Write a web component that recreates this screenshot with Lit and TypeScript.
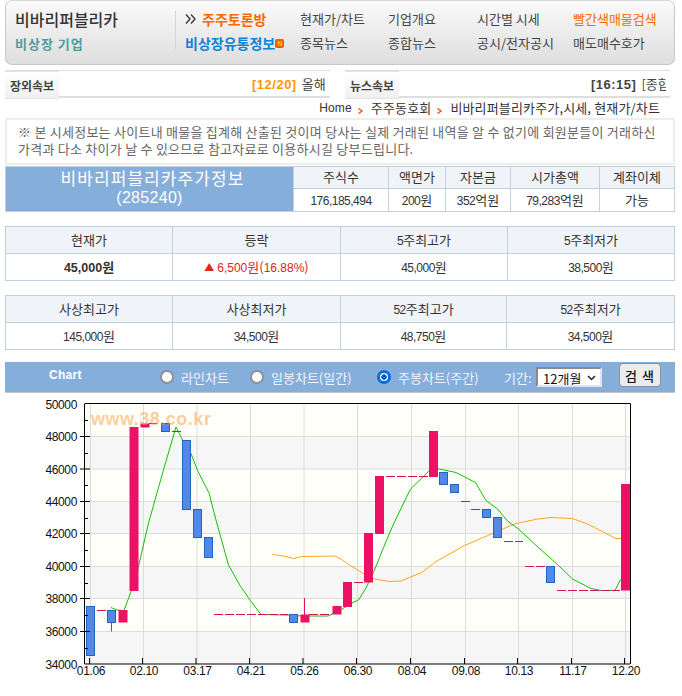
import { LitElement, html, css, svg } from "lit";
import { customElement } from "lit/decorators.js";

type Candle = { x: number; t: number; b: number; up: boolean; wick?: [number, number] };
const candles: Candle[] = [
  { x: 86.5, t: 606.5, b: 655.5, up: false },
  { x: 107.5, t: 610.5, b: 622.5, up: false, wick: [622, 631.5] },
  { x: 118.5, t: 610, b: 622.5, up: true },
  { x: 129.5, t: 427, b: 591, up: true },
  { x: 140.5, t: 423.5, b: 427.5, up: true },
  { x: 161.5, t: 423.5, b: 431.5, up: false },
  { x: 182.5, t: 440.5, b: 509.5, up: false },
  { x: 193.5, t: 509.5, b: 537.5, up: false },
  { x: 204.5, t: 537.5, b: 557.5, up: false },
  { x: 289.5, t: 614.5, b: 622.5, up: false },
  { x: 300.5, t: 614.5, b: 622.5, up: true, wick: [598, 615] },
  { x: 332.5, t: 606, b: 614.5, up: true },
  { x: 343, t: 582, b: 607, up: true },
  { x: 364, t: 533, b: 582.5, up: true },
  { x: 375, t: 476, b: 534, up: true },
  { x: 429, t: 431, b: 477, up: true },
  { x: 439.5, t: 472.5, b: 484.5, up: false },
  { x: 450.5, t: 484.5, b: 492.5, up: false },
  { x: 482.5, t: 509.5, b: 517.5, up: false },
  { x: 493.5, t: 517.5, b: 537.5, up: false },
  { x: 546.5, t: 566.5, b: 582.5, up: false },
  { x: 621, t: 484, b: 590.5, up: true },
];
const dashes: [number, number, number][] = [
  [97, 106, 610.5], [149, 157, 423.5], [172, 181, 431.5], [214, 288, 614.5],
  [309, 332, 614.5], [354, 363, 582.5], [386, 428, 476.5], [461, 470, 501.5],
  [471, 480, 509.5], [504, 523, 541.5], [525, 545, 566.5], [557, 620, 590.5],
];
const green = "111,607.5 117,610 124,610.5 131,591.5 138.5,566.5 148,525 164,468 176,427 182.5,440 190.5,452.5 198,471.5 209,493 216.5,522 228.5,565 240,585.5 250,600 261,614.5 286.5,615 302,616 328,616 341,610 349.5,604 358.5,600 366,588 374.5,570 386,541.5 393.5,524 410.5,489 429,471 439.5,469 456,472.5 475.5,482.5 486,500.5 497.5,509 507.5,521 518.5,529 534.5,544 557.5,564.5 572.5,579 591,588.5 601,590.5 615,590.5 620.5,579.5";
const orange = "272.5,554.5 283.5,556 293.5,558.5 301.5,556.5 335,556 341,559 349.5,565 362.5,573 374.5,579 389.5,581.5 401,581 422.5,572 434.5,562.5 464.5,545.5 492.5,533.5 514.5,524 537.5,519 551,517.5 572.5,518.5 587.5,524 594.5,527.5 616,538.5 621,538.5";
const ys = [404, 436.5, 469, 501.5, 533.5, 566.5, 598.5, 631.5, 664];
const yLabels = ["50000", "48000", "46000", "44000", "42000", "40000", "38000", "36000", "34000"];
const xs: [number, string][] = [
  [90.5, "01.06"], [143.5, "02.10"], [197, "03.17"], [250.5, "04.21"], [304, "05.26"], [357.5, "06.30"],
  [411.5, "08.04"], [465.5, "09.08"], [518.5, "10.13"], [572.5, "11.17"], [625.5, "12.20"],
];

@customElement("app-root")
export class AppRoot extends LitElement {
  static styles = css`
    :host { display: block; width: 682px; height: 696px; overflow: hidden; background: #fff; color: #333;
      font: 13px "Noto Sans CJK KR", sans-serif; }
    .wrap { width: 670px; margin-left: 5px; }
    .n { font-family: "Liberation Sans", sans-serif; font-size: 12px; letter-spacing: -0.5px; }

    .top { height: 65px; box-sizing: border-box; border: 1px solid #c8c8c8; border-top-color: #d8d8d8; border-radius: 7px;
      background: linear-gradient(#fafafa, #dfdede); display: flex; align-items: stretch; line-height: 16px; }
    .brand { width: 170px; height: 38px; margin-top: 10px; padding: 0 0 0 9px; box-sizing: border-box; border-right: 1px solid #d4d4d4;
      display: flex; flex-direction: column; gap: 9px; }
    .brand b { font-weight: 500; font-size: 16px; color: #333; white-space: nowrap; }
    .brand em { font-style: normal; font-weight: 700; font-size: 13px; color: #4b9da3; letter-spacing: 1px; }
    .links { display: grid; grid-template-columns: 115px 88px 89px 96px 96px; grid-auto-rows: 24px; margin: 6px 0 0 9px; align-items: center; white-space: nowrap; }
    .links a { color: #444; }
    .links a.red { color: #f56a00; }
    .links a.hot { color: #ff6600; font-weight: 700; font-size: 14px; display: flex; align-items: center; gap: 6px; }
    .links a.hot svg { flex: none; }
    .links a.blue { color: #0a84d6; font-weight: 700; font-size: 14px; display: flex; align-items: center; }
    .badge { width: 9px; height: 9px; border-radius: 2px; background: #f05a00; color: #ffd400; font: 700 7px/9px "Liberation Sans", sans-serif; text-align: center; flex: none; }

    .ticker { display: flex; gap: 15px; height: 29px; margin-top: 5px; }
    .tick { width: 325px; height: 28px; box-sizing: border-box; border-top: 1px solid #dedede; border-bottom: 2px solid #dedede; display: flex; align-items: center; white-space: nowrap; }
    .tab { width: 54px; height: 28px; margin: 2px 0 0; box-sizing: border-box; flex: none; text-align: center; line-height: 28px; font-weight: 700; font-size: 12px; color: #444;
      background: linear-gradient(#fff, #f0f0f0); border-top: 1px solid #e2e2e2; border-bottom: 1px solid #e2e2e2; }
    .news { margin-left: 193px; width: 75px; overflow: hidden; color: #444; }
    .tick.r .news { margin-left: 192px; width: 75px; }
    .news b { font-family: "Liberation Sans", sans-serif; font-size: 13px; letter-spacing: .5px; font-weight: 700; margin-right: 5px; }
    .news b.o { color: #ff9600; }

    .crumb { height: 19px; padding: 0 15px 2px 0; box-sizing: border-box; display: flex; justify-content: flex-end; align-items: center; gap: 6px; color: #333; white-space: nowrap; letter-spacing: .15px; }
    .crumb svg { margin: 7px 2px 0 0; }
    .crumb .h { font-family: "Liberation Sans", sans-serif; font-size: 12px; }

    .notice { height: 47px; box-sizing: border-box; border: 2px solid #eee; padding: 3px 0 0 11px; color: #666; line-height: 17px; white-space: nowrap; letter-spacing: .25px; }

    .info { display: flex; margin-top: 1px; height: 46px; }
    .title { width: 289px; box-sizing: border-box; background: #85aedb; border: 1px solid #bfd1e1; color: #fff; text-align: center; line-height: 20px; padding-top: 1px; }
    .title div { font-size: 17px; letter-spacing: 1.1px; padding-left: 6px; }
    .title div.code { font: 16px/20px "Liberation Sans", sans-serif; letter-spacing: .3px; padding-left: 0; }
    .grid { display: grid; border-top: 1px solid #bfd1e1; flex: none; }
    .info .grid { width: 381px; grid-template-columns: 95px 57px 65px 89px 75px; grid-template-rows: 22px 23px; }
    .tbl { display: grid; border-top: 1px solid #bfd1e1; border-left: 1px solid #bfd1e1; width: 670px; box-sizing: border-box; margin-top: 14px; grid-auto-rows: 27px; }
    .t2 { grid-template-columns: 167px 168px 167px 167px; }
    .t3 { grid-template-columns: 167px 168px 166px 168px; }
    .c { border-right: 1px solid #bfd1e1; border-bottom: 1px solid #bfd1e1; box-sizing: border-box; display: flex; align-items: center; justify-content: center; color: #333; white-space: nowrap; padding-bottom: 2px; }
    .c.th { background: #f0f3f7; }
    .c.strong { font-weight: 700; }
    .c.strong .n { font-weight: 700; font-size: 12.5px; letter-spacing: 0; }
    .c.up { color: #e2231a; gap: 3px; }
    .c.up .n { letter-spacing: 0; }
    .tri { font-size: 10px; }

    .bar { height: 31px; margin-top: 12px; box-sizing: border-box; background: #85aedb; border-bottom: 1px solid #c4c4c4; display: grid; grid-template-columns: 155px 90px 127px 127px 32px 66px 17px 42px; align-items: center; color: #f2f5fa; white-space: nowrap; }
    .bar .name { font: 700 12px "Liberation Sans", sans-serif; color: #fff; padding-left: 44px; margin-top: -4px; letter-spacing: .3px; }
    .bar label { display: flex; align-items: center; gap: 7px; }
    .bar input { appearance: none; margin: 0; width: 14px; height: 14px; box-sizing: border-box; border-radius: 50%; background: #fff; border: 2px solid #8f8f9d; flex: none; }
    .bar input:checked { background: radial-gradient(circle, #0a62d0 0 2.5px, #fff 3px); border: 3px solid #0a6cdc; }
    .sel { position: relative; width: 66px; height: 20px; }
    .sel select { appearance: none; width: 100%; height: 100%; box-sizing: border-box; border: 2px solid; border-color: #8a8a8a #e4e4e4 #e4e4e4 #8a8a8a; background: #fff; color: #111; padding: 0 0 0 5px; font: 13px "Noto Sans CJK KR", sans-serif; border-radius: 0; }
    .sel svg { position: absolute; right: 6px; top: 8px; pointer-events: none; }
    .bar button { grid-column: 8; width: 42px; height: 24px; margin-top: -4px; box-sizing: border-box; border: 1px solid #8f8f9d; border-radius: 4px; background: #ececec; color: #111; font: 500 13px "Noto Sans CJK KR", sans-serif; letter-spacing: 1px; padding: 0; }

    svg.chart { display: block; margin-left: -5px; }
    .ax { font: 12px "Liberation Sans", sans-serif; fill: #111; letter-spacing: -.35px; }
    .wm { font: 700 18px "Liberation Sans", sans-serif; fill: #ff9a3c; fill-opacity: .5; letter-spacing: .5px; }
  `;

  private cells(list: string[], cls = "") {
    return list.map((t) => {
      const m = t.match(/^([\d,.]+)(.*)$/);
      return html`<div class="c ${cls}"><span>${m ? html`<span class="n">${m[1]}</span>${m[2]}` : t}</span></div>`;
    });
  }

  private chart() {
    const band: unknown[] = [];
    for (let i = 0; i < 8; i++) {
      band.push(svg`<rect x="85" y=${ys[i]} width="545" height=${ys[i + 1] - ys[i]} fill=${i % 2 ? "#f6f6f6" : "#fffffa"} />`);
    }
    const minor: unknown[] = [];
    for (let i = 0; i < 8; i++) {
      const y = Math.round((ys[i] + ys[i + 1]) / 2) + 0.5;
      minor.push(svg`<line x1="84" x2="88" y1=${y} y2=${y} stroke="#000" />`);
    }
    return svg`
      ${band}
      ${ys.slice(1, 8).map((y) => svg`<line x1="85" x2="630" y1=${y} y2=${y} stroke="#dcdcdc" />`)}
      ${xs.map(([x]) => svg`<line x1=${x} x2=${x} y1="404" y2="664" stroke="#dcdcdc" />`)}
      <polyline points=${orange} fill="none" stroke="#ffa51e" stroke-width="1" />
      <polyline points=${green} fill="none" stroke="#14c000" stroke-width="1" />
      ${dashes.map(([a, b, y]) => svg`<line x1=${a} x2=${b} y1=${y} y2=${y} stroke="#d81060" stroke-dasharray="9 2" />`)}
      ${candles.map((c) => svg`
        ${c.wick ? svg`<line x1=${c.x + 4} x2=${c.x + 4} y1=${c.wick[0]} y2=${c.wick[1]} stroke=${c.up ? "#e0105f" : "#2a68c4"} />` : ""}
        ${c.up
          ? svg`<rect x=${c.x} y=${c.t} width="9" height=${c.b - c.t} fill="#ec1164" />`
          : svg`<rect x=${c.x} y=${c.t} width="8" height=${c.b - c.t} fill="#5289e8" stroke="#2264c2" />`}
      `)}
      <path d="M84.5 404V664H630M84.5 403.5H630.5V664" fill="none" stroke="#000" />
      ${minor}
      ${ys.slice(1, 8).map((y) => svg`<line x1="80" x2="90" y1=${y} y2=${y} stroke="#000" />`)}
      ${xs.map(([x]) => svg`<line x1=${x - 1} x2=${x - 1} y1="658" y2="664" stroke="#000" />`)}
      ${ys.map((y, i) => svg`<text class="ax" x="77" y=${y + 4.5} text-anchor="end">${yLabels[i]}</text>`)}
      ${xs.map(([x, t]) => svg`<text class="ax" x=${x + 0.5} y="675" text-anchor="middle">${t}</text>`)}
      <text class="wm" x="91" y="425">www.38.co.kr</text>
    `;
  }

  render() {
    const crumbIcon = html`<svg width="5" height="6" viewBox="0 0 5 6"><path d="M0.5 0.5L4 3L0.5 5.5" fill="none" stroke="#f05a1e" stroke-width="1.4" /></svg>`;
    return html`
      <div class="wrap">
        <header class="top">
          <div class="brand"><b>비바리퍼블리카</b><em>비상장 기업</em></div>
          <nav class="links">
            <a class="hot"><svg width="11" height="10" viewBox="0 0 11 10"><path d="M1 .5L5 5L1 9.5M6 .5L10 5L6 9.5" fill="none" stroke="#444" stroke-width="1.5" /></svg>주주토론방</a>
            <a>현재가/차트</a><a>기업개요</a><a>시간별 시세</a><a class="red">빨간색매물검색</a>
            <a class="blue">비상장유통정보<span class="badge">N</span></a>
            <a>종목뉴스</a><a>종합뉴스</a><a>공시/전자공시</a><a>매도매수호가</a>
          </nav>
        </header>

        <section class="ticker">
          <div class="tick"><div class="tab">장외속보</div><div class="news"><b class="o">[12/20]</b>올해</div></div>
          <div class="tick r"><div class="tab">뉴스속보</div><div class="news"><b>[16:15]</b>[종합</div></div>
        </section>

        <div class="crumb"><span class="h">Home</span>${crumbIcon}<span>주주동호회</span>${crumbIcon}<span>비바리퍼블리카주가,시세, 현재가/차트</span></div>

        <div class="notice">※ 본 시세정보는 사이트내 매물을 집계해 산출된 것이며 당사는 실제 거래된 내역을 알 수 없기에 회원분들이 거래하신<br />가격과 다소 차이가 날 수 있으므로 참고자료로 이용하시길 당부드립니다.</div>

        <section class="info">
          <div class="title"><div>비바리퍼블리카주가정보</div><div class="code">(285240)</div></div>
          <div class="grid">
            ${this.cells(["주식수", "액면가", "자본금", "시가총액", "계좌이체"], "th")}
            ${this.cells(["176,185,494", "200원", "352억원", "79,283억원", "가능"])}
          </div>
        </section>

        <section class="tbl t2">
          ${this.cells(["현재가", "등락", "5주최고가", "5주최저가"], "th")}
          <div class="c strong"><span><span class="n">45,000</span>원</span></div>
          <div class="c up"><span class="tri">▲</span><span><span class="n">6,500</span>원(<span class="n">16.88%</span>)</span></div>
          ${this.cells(["45,000원", "38,500원"])}
        </section>

        <section class="tbl t3">
          ${this.cells(["사상최고가", "사상최저가", "52주최고가", "52주최저가"], "th")}
          ${this.cells(["145,000원", "34,500원", "48,750원", "34,500원"])}
        </section>

        <form class="bar" @submit=${(e: Event) => e.preventDefault()}>
          <div class="name">Chart</div>
          <label><input type="radio" name="k" /><span>라인차트</span></label>
          <label><input type="radio" name="k" /><span>일봉차트(일간)</span></label>
          <label><input type="radio" name="k" checked /><span>주봉차트(주간)</span></label>
          <span>기간:</span>
          <div class="sel"><select><option>12개월</option></select><svg width="9" height="6" viewBox="0 0 9 6"><path d="M1 1L4.5 4.5L8 1" fill="none" stroke="#222" stroke-width="1.5" /></svg></div>
          <button type="submit">검 색</button>
        </form>

        <svg class="chart" width="682" height="303" viewBox="0 393 682 303">${this.chart()}</svg>
      </div>
    `;
  }
}
